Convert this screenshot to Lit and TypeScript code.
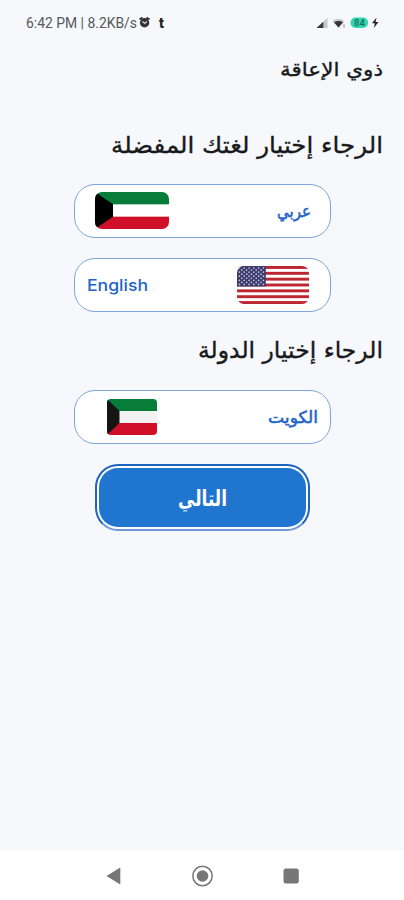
import { LitElement, html, svg, css } from "lit";
import { customElement, property } from "lit/decorators.js";

/** A single line of text fitted to a fixed width. */
@customElement("fit-text")
class FitText extends LitElement {
  @property() text = "";
  @property({ type: Number }) width = 100;
  @property({ type: Number }) size = 16;
  @property({ type: Number }) height = 40;
  @property({ type: Number }) base = 28;
  static styles = css`
    :host { display: block; }
    svg { display: block; overflow: visible; }
    text { fill: currentColor; }
  `;
  render() {
    return html`<svg width=${this.width} height=${this.height}>
      ${svg`<text x="0" y=${this.base} font-size=${this.size} direction="ltr"
        textLength=${this.width} lengthAdjust="spacingAndGlyphs">${this.text}</text>`}
    </svg>`;
  }
}

@customElement("status-bar")
class StatusBar extends LitElement {
  static styles = css`
    :host { display: flex; height: 46px; padding: 0 24px 0 26px; box-sizing: border-box;
      justify-content: space-between; font-family: Roboto, sans-serif; color: #55585b; direction: ltr; }
    .group { display: flex; align-items: flex-start; }
    svg { display: block; }
  `;
  render() {
    return html`
      <div class="group">
        <fit-text text="6:42 PM | 8.2KB/s" width="111" size="14" height="46" base="28"></fit-text>
        <svg width="32" height="46">
          <path d="M2.5 19.5l3-2M12.500 19.500l-3-2" stroke="#333" stroke-width="2"/>
          <circle cx="7.600" cy="22.800" r="4.700" fill="#333"/>
          <path d="M5.500 21.500l2.200 2 2.200-2" fill="none" stroke="#d5d7d9" stroke-width="1.100"/>
          <text x="22" y="27.500" font-size="14" font-weight="900" fill="#222">t</text>
        </svg>
      </div>
      <svg width="66" height="46" viewBox="314 0 66 46">
        <path d="M316.500 28L327.500 18V28Z" fill="#c6c8ca"/>
        <path d="M316.500 28L323.300 21.700V28Z" fill="#383a3c"/>
        <path d="M332.500 21Q338.500 16.500 344.500 21L338.500 28Z" fill="#c6c8ca"/>
        <path d="M334 22.300Q338.500 19.500 343 22.300L338.500 27.600Z" fill="#333"/>
        <path d="M344 24v4" stroke="#999" stroke-width="1"/>
        <rect x="350.500" y="17.500" width="17.500" height="10.500" rx="5" fill="#2fd6ae"/>
        <text x="354" y="26.300" font-size="9.500" font-weight="500" fill="#226b60">84</text>
        <path d="M376.500 17.500l-4.500 5.800h2.800l-1 4.700 4.700-6h-2.900z" fill="#222"/>
      </svg>`;
  }
}

@customElement("kuwait-flag")
class KuwaitFlag extends LitElement {
  @property({ type: Number }) width = 74;
  @property({ type: Number }) height = 37;
  @property({ type: Number }) hoist = 18;
  @property() ink = "#000";
  @property() pale = "#fff";
  @property({ type: Number }) radius = 7;
  static styles = css`:host, svg { display: block; }`;
  render() {
    const { width: w, height: h, hoist, radius: r } = this;
    return html`<svg width=${w} height=${h}>
      <defs><clipPath id="c"><rect width=${w} height=${h} rx=${r} /></clipPath></defs>
      <g clip-path="url(#c)">
        <rect width=${w} height=${h} fill=${this.pale} />
        <rect width=${w} height=${h / 3} fill="#087c39" />
        <rect y=${(h * 2) / 3} width=${w} height=${h / 3} fill="#d01028" />
        <path d="M0 0L${hoist} ${h / 3}V${(h * 2) / 3}L0 ${h}Z" fill=${this.ink} />
      </g>
    </svg>`;
  }
}

@customElement("us-flag")
class UsFlag extends LitElement {
  static styles = css`:host, svg { display: block; }`;
  render() {
    const w = 72, h = 38, s = h / 13;
    const stars = [];
    for (let row = 0; row < 9; row++) {
      for (let col = 0; col < (row % 2 ? 5 : 6); col++) {
        stars.push(svg`<circle cx=${2.4 + col * 4.8 + (row % 2 ? 2.4 : 0)} cy=${2 + row * 2.05} r=".85" fill="#c5c6dc"/>`);
      }
    }
    return html`<svg width=${w} height=${h}>
      <defs><clipPath id="c"><rect width=${w} height=${h} rx="7" /></clipPath></defs>
      <g clip-path="url(#c)">
        <rect width=${w} height=${h} fill="#fff" />
        ${[0, 1, 2, 3, 4, 5, 6].map((i) => svg`<rect y=${i * 2 * s} width=${w} height=${s} fill="#bd2531"/>`)}
        <rect width="28.800" height=${s * 7} fill="#3c3b6e" />
        ${stars}
      </g>
    </svg>`;
  }
}

@customElement("app-root")
class AppRoot extends LitElement {
  static styles = css`
    :host { display: flex; flex-direction: column; width: 404px; height: 900px; overflow: hidden;
      background: #f6f8fb; font-family: "DejaVu Sans", sans-serif; color: #17191c; }
    .line { display: flex; flex: none; justify-content: flex-end; padding-right: 21px;
      stroke: currentColor; stroke-width: .35px; }
    .title { height: 64px; }
    .ask { height: 74px; }
    .country { height: 58px; }
    .choice { box-sizing: border-box; display: flex; flex: none; align-items: center; justify-content: space-between;
      width: 257px; height: 54px; margin: 0 0 20px 74px; border: 1px solid #7fa5dc; border-radius: 21px;
      background: #fff; color: #1d64c8; }
    .arabic { padding: 0 19px 1px 20px; }
    .english { padding: 0 21px 0 12px; font-family: Inter, sans-serif; font-weight: 500; }
    .kuwait { padding: 0 12px 0 32px; margin-bottom: 20px; }
    .semi { stroke: currentColor; stroke-width: .55px; }
    .next { box-sizing: border-box; display: flex; flex: none; justify-content: center; align-items: center;
      width: 215px; height: 67px; margin-left: 95px; border: 2px solid #1d63c0; border-bottom-color: #7198d8;
      border-radius: 23px; background: #fff; padding: 2px; }
    .fill { display: flex; justify-content: center; align-items: center; width: 100%; height: 100%;
      border-radius: 19px; background: #2075cf; color: #fff; font-weight: 700; }
    .nav { display: flex; flex: none; align-items: flex-start; height: 50px; margin-top: auto; background: #fff; }
    .nav svg { display: block; }
  `;
  render() {
    return html`
      <status-bar></status-bar>
      <div class="line title"><fit-text text="ذوي الإعاقة" width="103" size="19" height="60" base="30"></fit-text></div>
      <div class="line ask"><fit-text text="الرجاء إختيار لغتك المفضلة" width="272" size="23" height="60" base="42.500"></fit-text></div>
      <div class="choice arabic">
        <kuwait-flag width="74" height="37" hoist="18"></kuwait-flag>
        <fit-text class="semi" text="عربي" width="34" size="16.500" height="52" base="32"></fit-text>
      </div>
      <div class="choice english">
        <fit-text text="English" width="61" size="16.500" height="52" base="31.500"></fit-text>
        <us-flag></us-flag>
      </div>
      <div class="line country"><fit-text text="الرجاء إختيار الدولة" width="185" size="23" height="58" base="26"></fit-text></div>
      <div class="choice kuwait">
        <kuwait-flag width="50" height="36" hoist="12.500" radius="4" ink="#151515" pale="#f2f2f2"></kuwait-flag>
        <fit-text class="semi" text="الكويت" width="50" size="16.500" height="52" base="31.500"></fit-text>
      </div>
      <div class="next"><div class="fill">
        <fit-text text="التالي" width="49" size="22" height="58" base="36.500"></fit-text>
      </div></div>
      <div class="nav">
        <svg width="404" height="50" viewBox="0 850 404 50">
          <path d="M106.500 876L120.300 867.500V884.500Z" fill="#777"/>
          <circle cx="202.500" cy="876" r="9.700" fill="none" stroke="#777" stroke-width="1.500"/>
          <circle cx="202.500" cy="876" r="5.800" fill="#777"/>
          <rect x="283.500" y="868.500" width="15.300" height="15" rx="2.500" fill="#777"/>
        </svg>
      </div>`;
  }
}
